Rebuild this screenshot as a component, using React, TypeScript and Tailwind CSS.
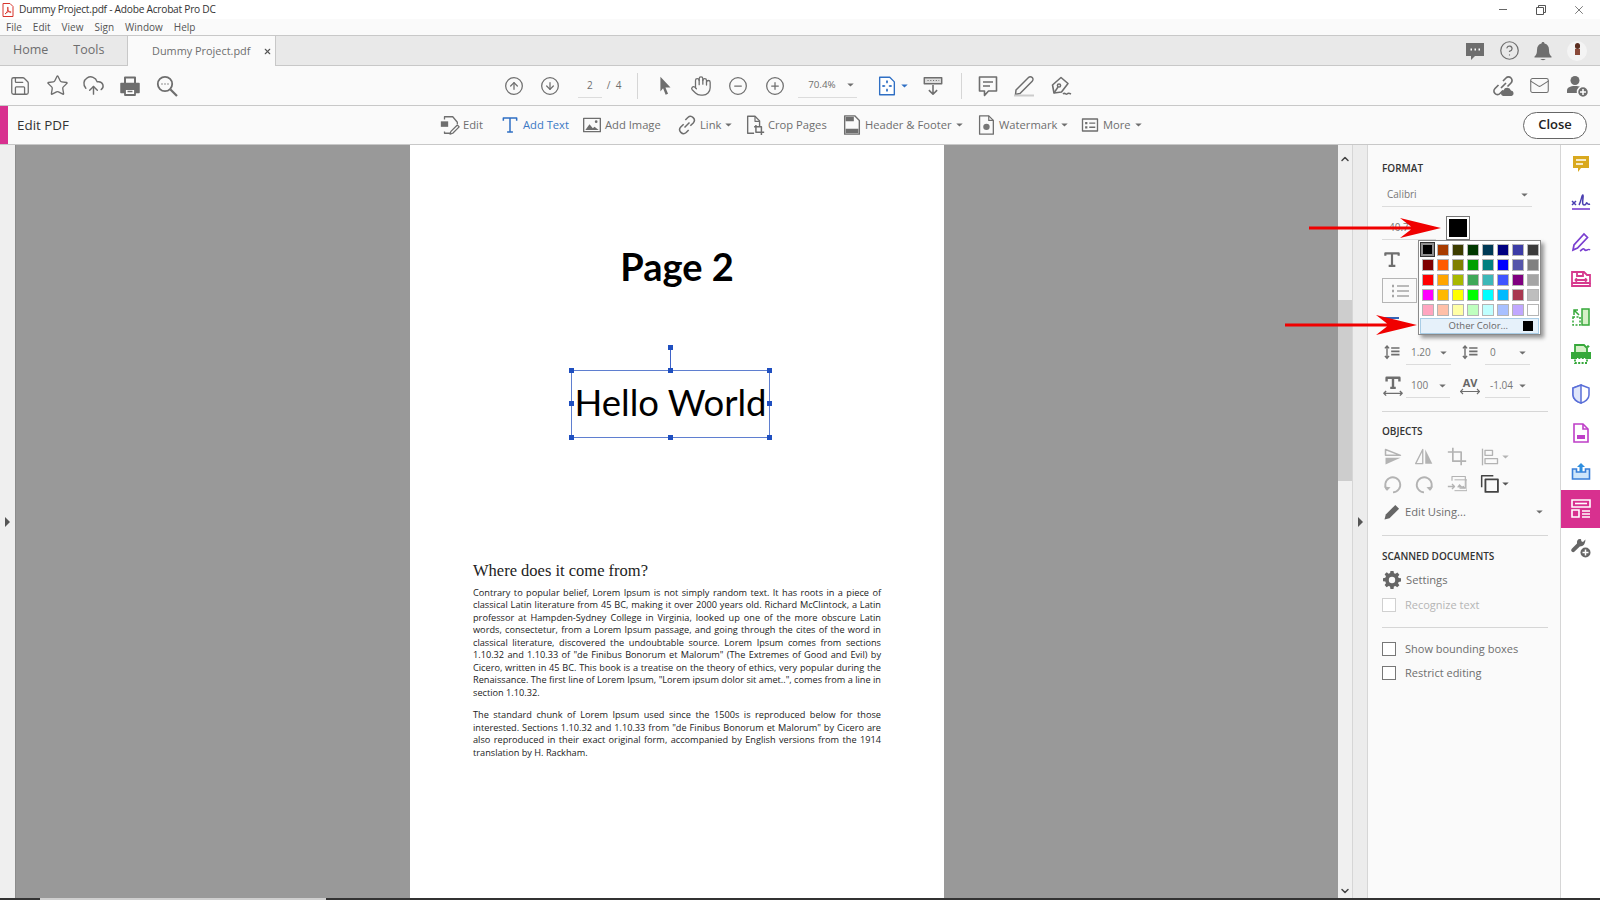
// App.tsx - Acrobat Edit PDF window

import type { ReactNode } from "react";
import {
  ChevronDown,
  ChevronUp,
  CircleArrowDown,
  CircleArrowUp,
  CircleHelp,
  CircleMinus,
  CirclePlus,
  CloudUpload,
  Hand,
  Mail,
  Save,
  Star,
  X,
} from "lucide-react";

const GRAY = "#6e6e6e";

function Svg({ size = 24, color = GRAY, children, vb = "0 0 24 24" }: { size?: number; color?: string; children: ReactNode; vb?: string }) {
  return (
    <svg width={size} height={size} viewBox={vb} fill="none" stroke={color} strokeWidth={1.5} strokeLinejoin="round">
      {children}
    </svg>
  );
}

function Caret({ color = "#6e6e6e", className = "" }: { color?: string; className?: string }) {
  return (
    <svg width="7" height="4" viewBox="0 0 8 5" className={className}>
      <path d="M0 0.5h8L4 4.5z" fill={color} />
    </svg>
  );
}

function Printer() {
  return (
    <Svg>
      <path d="M7 9V3.5h10V9" fill="none" strokeWidth={2} />
      <path d="M3 9.5h18v9h-3.5V15h-11v3.5H3z" fill={GRAY} stroke={GRAY} />
      <path d="M7 15h10v6H7z" fill="#fff" strokeWidth={1.8} />
      <path d="M9.5 17.5h5" />
    </Svg>
  );
}

function SearchDots() {
  return (
    <Svg>
      <circle cx="10" cy="10" r="7.2" strokeWidth={1.8} />
      <path d="M15.5 15.5L22 22" strokeWidth={2.2} />
      <path d="M6.5 10h1M9.5 10h1M12.5 10h1" strokeWidth={1.6} />
    </Svg>
  );
}

function Pointer() {
  return (
    <Svg size={22}>
      <path d="M7 2l11 11.5h-5.5l2.8 7-2.6 1-2.8-7L7 18z" fill={GRAY} stroke="none" />
    </Svg>
  );
}

function FitPage() {
  return (
    <Svg size={22} color="#2f6fc4">
      <path d="M4 2.5h11l5 5v14H4z" fill="#fff" />
      <path d="M12 6v3M12 15v3M7 12h3M14 12h3" strokeWidth={1.6} />
      <path d="M10.8 8h2.4L12 6zM10.8 16h2.4L12 18zM8.5 10.8v2.4L6.5 12zM15.5 10.8v2.4l2-1.2z" fill="#2f6fc4" stroke="none" />
    </Svg>
  );
}

function Keyboard() {
  return (
    <Svg size={22}>
      <path d="M2.5 3h19v6.5h-19z" fill="#ddd" strokeWidth={1.6} />
      <path d="M6 6h1.2M9 6h1.2M12 6h1.2M15 6h1.2M18 6h.8" strokeWidth={1.3} />
      <path d="M12 11v10M7.5 16.5L12 21l4.5-4.5" strokeWidth={1.7} />
    </Svg>
  );
}

function Comment({ size = 24 }: { size?: number }) {
  return (
    <Svg size={size}>
      <path d="M3.5 3h17v14h-8l-4 4.5V17h-5z" strokeWidth={1.6} />
      <path d="M7 8h10M7 12h7" strokeWidth={1.5} />
    </Svg>
  );
}

function Highlight() {
  return (
    <Svg>
      <path d="M4 16L16.5 3.5a2.6 2.6 0 013.7 3.7L8 19.5l-4.5 1z" strokeWidth={1.5} />
      <path d="M2 21.5h20" stroke="#ccc" strokeWidth={2} />
    </Svg>
  );
}

function PenNib() {
  return (
    <Svg>
      <path d="M5 19L3.5 11 12 3.5l7 6L12.5 18z" strokeWidth={1.6} />
      <circle cx="10" cy="11.5" r="1.6" />
      <path d="M5 19l4-6" />
      <path d="M14 20c2-2 3 1 4 0s2-1 4 0" strokeWidth={1.5} />
    </Svg>
  );
}

function LinkCloud() {
  return (
    <Svg>
      <path d="M10 14l5-5M7.5 11L4 14.5a3.5 3.5 0 005 5l3-3M12 7l3-3a3.5 3.5 0 015 5l-3.5 3.5" strokeWidth={1.7} />
      <path d="M12 22a3 3 0 01.5-5.8 4 4 0 017.5.3A2.8 2.8 0 0120.5 22z" fill={GRAY} stroke="none" />
    </Svg>
  );
}

function UserPlus() {
  return (
    <Svg>
      <circle cx="10" cy="6.5" r="4.5" fill={GRAY} stroke="none" />
      <path d="M2 19v-2.5c0-3 3-4.5 8-4.5s6 1 6 2.5v4.5z" fill={GRAY} stroke="none" />
      <circle cx="18" cy="18" r="5.5" fill={GRAY} stroke="#fafafa" />
      <path d="M18 15v6M15 18h6" stroke="#fff" />
    </Svg>
  );
}

function EditTool() {
  return (
    <Svg size={22}>
      <path d="M8 3h7l5 6v2M6 19v2h7M6 6V3h2" strokeWidth={1.4} />
      <path d="M2 8h8v6H2z" fill={GRAY} stroke="none" />
      <path d="M13 19l7-7 2 2-7 7-3 1z" strokeWidth={1.4} />
    </Svg>
  );
}

function TBig({ color, size = 20 }: { color: string; size?: number }) {
  return (
    <Svg size={size} color={color}>
      <path d="M4 7V3.5h16V7M12 3.5v17M8.5 20.5h7" strokeWidth={1.8} />
    </Svg>
  );
}

function ImageTool() {
  return (
    <Svg size={20}>
      <path d="M2 4h20v16H2z" strokeWidth={1.6} />
      <path d="M4 18l5-7 4 5 2-2 5 4z" fill={GRAY} stroke="none" />
      <circle cx="17" cy="8" r="1.6" fill={GRAY} stroke="none" />
    </Svg>
  );
}

function ChainLink() {
  return (
    <Svg size={20}>
      <path d="M9 15l6-6M10 6l3-3a4.6 4.6 0 016.5 6.5l-3.5 3.5M14 18l-3 3a4.6 4.6 0 01-6.5-6.5L8 11" strokeWidth={1.8} />
    </Svg>
  );
}

function CropTool() {
  return (
    <Svg size={22}>
      <path d="M11 21H4V2.5h8l5 5V13" strokeWidth={1.5} />
      <path d="M12 2.5V8h5" strokeWidth={1.3} />
      <path d="M13 12v8h9M11 14h8v9" strokeWidth={1.6} />
    </Svg>
  );
}

function HeaderTool() {
  return (
    <Svg size={22}>
      <path d="M4 2h11l5 5v15H4z" strokeWidth={1.5} />
      <path d="M5 3h9v5H5zM5 16h14v5H5z" fill={GRAY} stroke="none" />
    </Svg>
  );
}

function WatermarkTool() {
  return (
    <Svg size={22}>
      <path d="M5 2h10l5 5v15H5z" strokeWidth={1.4} />
      <path d="M15 2v5h5" strokeWidth={1.3} />
      <circle cx="12.5" cy="14" r="3.5" fill="#777" stroke="none" />
    </Svg>
  );
}

function MoreTool() {
  return (
    <Svg size={18}>
      <path d="M2 4h20v16H2z" strokeWidth={1.8} />
      <path d="M5.5 8h3v3h-3zM5.5 13.5h3v3h-3z" fill={GRAY} stroke="none" />
      <path d="M11 9.5h8M11 15h8" strokeWidth={1.8} />
    </Svg>
  );
}

function PdfDoc() {
  return (
    <svg width="12" height="14" viewBox="0 0 12 14" fill="none">
      <path d="M1 .5h7l3 3v10H1z" stroke="#d8352c" fill="#fff" />
      <path d="M3 11c2-1 3-4 3-6s-1-1 0 2 3 3 3 2-3-1-6 2z" stroke="#d8352c" strokeWidth=".9" />
    </svg>
  );
}

function TextGlyph() {
  return (
    <Svg size={20}>
      <path d="M4 7V4h16v3M12 4v15M8 19h8" strokeWidth={2.6} />
    </Svg>
  );
}

function LineSpace() {
  return (
    <Svg size={20}>
      <path d="M4 3v14M1.5 5.5L4 2.5l2.5 3M1.5 14.5L4 17.5l2.5-3" strokeWidth={1.7} transform="translate(2 1)" />
      <path d="M11 6h10M11 10h10M11 14h10" strokeWidth={2} />
    </Svg>
  );
}

function TextScale() {
  return (
    <Svg size={22}>
      <path d="M5 7V3h14v4M12 3v11M9 14h6" strokeWidth={2.6} />
      <path d="M2 20h20M4.5 17.5L2 20l2.5 2.5M19.5 17.5L22 20l-2.5 2.5" strokeWidth={1.5} />
    </Svg>
  );
}

function Tracking() {
  return (
    <div className="flex w-[22px] flex-col items-center">
      <span className="text-[11px] leading-[11px] font-bold text-[#666]">AV</span>
      <svg width="20" height="7" viewBox="0 0 20 7" fill="none" stroke={GRAY} strokeWidth="1.2">
        <path d="M0 3.5h20M3 1L.5 3.5 3 6M17 1l2.5 2.5L17 6" />
      </svg>
    </div>
  );
}

const DIS = "#b3b3b3";

function ObjIcons() {
  return (
    <div>
      <div className="flex h-[27px] items-center">
        <div className="w-[32px] pl-[1px]">
          <Svg size={20} color={DIS}>
            <path d="M3 3l18 7H3z" fill="none" strokeWidth={1.8} />
            <path d="M3 13h18L3 21z" fill={DIS} stroke="none" />
          </Svg>
        </div>
        <div className="w-[33px]">
          <Svg size={20} color={DIS}>
            <path d="M10.5 3L2 20h8.5z" strokeWidth={1.6} />
            <path d="M13.5 3L22 20h-8.5z" fill={DIS} stroke="none" />
          </Svg>
        </div>
        <div className="w-[33px]">
          <Svg size={20} color={DIS}>
            <path d="M1 6h16v16M7 1v16h16" strokeWidth={2} />
          </Svg>
        </div>
        <div className="flex items-center gap-[2px]">
          <Svg size={20} color={DIS}>
            <path d="M3 2v20" strokeWidth={1.6} />
            <path d="M6 4h9v6H6zM6 14h15v6H6z" strokeWidth={1.6} />
          </Svg>
          <Caret color={DIS} />
        </div>
      </div>
      <div className="flex h-[27px] items-center">
        <div className="w-[32px] pl-[1px]">
          <Svg size={20} color={DIS}>
            <path d="M5 19a9 9 0 117 3" strokeWidth={2.2} />
            <path d="M1 15l4 5 4-4z" fill={DIS} stroke="none" />
          </Svg>
        </div>
        <div className="w-[33px]">
          <Svg size={20} color={DIS}>
            <path d="M19 19a9 9 0 10-7 3" strokeWidth={2.2} />
            <path d="M23 15l-4 5-4-4z" fill={DIS} stroke="none" />
          </Svg>
        </div>
        <div className="w-[33px]">
          <Svg size={20} color={DIS}>
            <path d="M6 8V3h16v14h-7" strokeWidth={1.4} />
            <path d="M9 7h15v13H9" strokeWidth={1.2} />
            <path d="M12 16l3-4 3 3 2-1 2 3z" fill={DIS} stroke="none" />
            <path d="M1 15h8M6 12l3 3-3 3" strokeWidth={1.6} />
          </Svg>
        </div>
        <div className="flex items-center gap-[2px]">
          <Svg size={20} color="#444">
            <path d="M2 16V2h14" strokeWidth={1.8} />
            <path d="M6.5 6.5h15v15h-15z" strokeWidth={2.2} />
          </Svg>
          <Caret color="#555" />
        </div>
      </div>
    </div>
  );
}

const SWATCHES = [
  ["#000000", "#a83c00", "#3d3d00", "#003800", "#003a55", "#000080", "#3c3ca6", "#3c3c3c"],
  ["#800000", "#ff5a00", "#808000", "#00a000", "#008080", "#0000ff", "#5555aa", "#808080"],
  ["#ff0000", "#ffa500", "#a8b800", "#3fa858", "#3cb8b8", "#4055ff", "#800080", "#a5a5a5"],
  ["#ff00ff", "#ffb900", "#ffff00", "#00ff00", "#00ffff", "#00baff", "#a83850", "#bebebe"],
  ["#ffa5c0", "#ffc0a8", "#ffffa5", "#bfffbf", "#bfffff", "#a8c0ff", "#c0a8ff", "#ffffff"],
];

function ColorPopup() {
  return (
    <div className="absolute top-[95px] left-[50px] z-10 w-[123px] border border-[#8a8a8a] bg-white pt-[1px] shadow-[3px_3px_4px_rgba(0,0,0,0.4)]">
      <div className="grid grid-cols-8 pl-[1px]">
        {SWATCHES.flat().map((c, i) => (
          <div key={i} className="flex h-[15px] w-[15px] items-center justify-center">
            <div
              className={i === 0 ? "h-[13px] w-[13px] border-2 border-[#8f8f8f] outline outline-1 outline-[#333]" : "h-[12px] w-[12px] border-[1.5px] border-[#b5b5b5]"}
              style={{ backgroundColor: c }}
            />
          </div>
        ))}
      </div>
      <div className="mx-[1px] mt-[1px] flex h-[16px] items-center justify-end border border-[#a9cde6] bg-[#e6f1fa] pr-[5px]">
        <span className="mr-[15px] text-[9.5px] text-[#666]">Other Color...</span>
        <div className="h-[10px] w-[10px] bg-black" />
      </div>
    </div>
  );
}

function RedArrow({ className, width }: { className: string; width: number }) {
  return (
    <svg width={width} height="20" viewBox={`0 0 ${width} 20`} className={className}>
      <path d={`M0 8.6H${width - 30}L${width - 41} 0 ${width} 10 ${width - 41} 20 ${width - 30} 11.4H0z`} fill="#f00000" />
    </svg>
  );
}

function SelectField({ value, w, ml = 0 }: { value: string; w: number; ml?: number }) {
  return (
    <div className="flex h-[24px] items-center justify-between border-b border-[#dcdcdc] pr-[4px] pl-[5px] text-[10px] text-[#777]" style={{ width: w, marginLeft: ml }}>
      <span>{value}</span>
      <Caret />
    </div>
  );
}

function Check({ label, disabled }: { label: string; disabled?: boolean }) {
  return (
    <label className={`flex items-center gap-[9px] text-[11px] ${disabled ? "text-[#b5b5b5]" : "text-[#6e6e6e]"}`}>
      <span className={`h-[14px] w-[14px] border bg-white ${disabled ? "border-[#d0d0d0]" : "border-[#777]"}`} />
      {label}
    </label>
  );
}

function PanelTitle({ children }: { children: ReactNode }) {
  return <div className="text-[10px] font-semibold text-[#333]">{children}</div>;
}

function FormatPanel() {
  return (
    <aside className="relative w-[193px] shrink-0 border-r border-[#d6d6d6] bg-[#fafafa] pt-[16px] pl-[14px]">
      <PanelTitle>FORMAT</PanelTitle>
      <div className="mt-[7px] w-[150px]">
        <SelectField value="Calibri" w={150} />
      </div>
      <div className="mt-[9px] flex items-start">
        <div className="flex h-[24px] w-[54px] items-center border-b border-[#dcdcdc] pl-[7px] text-[10px] text-[#777]">40.7</div>
        <div className="ml-[10px] flex h-[24px] w-[24px] items-center justify-center border border-[#777] bg-white">
          <div className="h-[18px] w-[18px] bg-black" />
        </div>
      </div>
      <div className="mt-[10px]">
        <TextGlyph />
      </div>
      <div className="mt-[8px] flex h-[25px] w-[35px] items-center justify-center border border-[#b5b5b5]">
        <svg width="18" height="14" viewBox="0 0 18 14" fill="none" stroke="#a5a5a5" strokeWidth="1.4">
          <path d="M6 2h12M6 7h12M6 12h12" />
          <path d="M1 2h2M1 7h2M1 12h2" strokeWidth="2.4" />
        </svg>
      </div>
      <div className="mt-[14px] h-[14px] w-[17px] border-t-2 border-[#3565b8]" />
      <div className="mt-[10px] flex items-center">
        <LineSpace />
        <SelectField value="1.20" w={45} ml={4} />
        <div className="ml-[9px]">
          <LineSpace />
        </div>
        <SelectField value="0" w={45} ml={5} />
      </div>
      <div className="mt-[9px] flex items-center">
        <TextScale />
        <SelectField value="100" w={44} ml={2} />
        <div className="ml-[9px]">
          <Tracking />
        </div>
        <SelectField value="-1.04" w={45} ml={4} />
      </div>
      <div className="mt-[13px] w-[166px] border-t border-[#d6d6d6]" />
      <div className="mt-[12px]">
        <PanelTitle>OBJECTS</PanelTitle>
      </div>
      <div className="mt-[4px]">
        <ObjIcons />
      </div>
      <div className="mt-[5px] flex w-[166px] items-center">
        <Svg size={20} color="#666">
          <path d="M3 21l1.5-6L16 3.5l4.5 4.5L9 19.5z" fill="#666" stroke="none" />
        </Svg>
        <span className="ml-[3px] text-[11.2px] text-[#6e6e6e]">Edit Using...</span>
        <Caret className="mr-[5px] ml-auto" />
      </div>
      <div className="mt-[13px] w-[166px] border-t border-[#d6d6d6]" />
      <div className="mt-[13px]">
        <PanelTitle>SCANNED DOCUMENTS</PanelTitle>
      </div>
      <div className="mt-[6px] flex items-center">
        <svg width="20" height="20" viewBox="0 0 20 20">
          <path
            d="M8.3 1h3.4l.5 2.6 1.6.7 2.2-1.5 2.2 2.4-1.5 2 .7 1.7 2.6.4v3.4l-2.6.5-.7 1.6 1.5 2.2-2.4 2.2-2-1.5-1.7.7-.4 2.6H8.3l-.5-2.6-1.6-.7-2.2 1.5L1.8 16.6l1.5-2-.7-1.7L0 12.5V9.1l2.6-.5.7-1.6L1.8 4.8 4.2 2.6l2 1.5 1.7-.7z"
            fill="#666"
            transform="translate(1 0) scale(.9)"
          />
          <circle cx="10" cy="10" r="3.2" fill="#fafafa" />
        </svg>
        <span className="ml-[4px] text-[11.2px] text-[#6e6e6e]">Settings</span>
      </div>
      <div className="mt-[7px]">
        <Check label="Recognize text" disabled />
      </div>
      <div className="mt-[13px] w-[166px] border-t border-[#d6d6d6]" />
      <div className="mt-[13px]">
        <Check label="Show bounding boxes" />
      </div>
      <div className="mt-[8px]">
        <Check label="Restrict editing" />
      </div>
      <ColorPopup />
      <RedArrow className="absolute top-[73px] left-[-59px] z-20" width={132} />
      <RedArrow className="absolute top-[170px] left-[-83px] z-20" width={132} />
    </aside>
  );
}

const Y = "#d9a91f";
const P = "#7a3fd0";
const M = "#d63a8e";
const G = "#36a83a";
const B = "#3a7fd8";

function Rail() {
  return (
    <nav className="flex w-[39px] shrink-0 flex-col items-center bg-white pt-[7px]">
      <div className="flex h-[24px] items-center">
        <svg width="20" height="20" viewBox="0 0 20 20">
          <path d="M2 2h16v12h-8l-3 4v-4H2z" fill={Y} />
          <path d="M5 6h10M5 10h7" stroke="#fff" strokeWidth="1.6" />
        </svg>
      </div>
      <div className="mt-[14px] flex h-[24px] items-center">
        <svg width="20" height="20" viewBox="0 0 20 20" fill="none" stroke="#4a3fb0" strokeWidth="1.5">
          <path d="M1 9l4 4M5 9l-4 4M8 13c2-3 3-11 4-10s-2 10 1 10 2-3 3-2 1 2 3 1" />
          <path d="M1 17h18" strokeWidth="1.6" stroke={P} />
        </svg>
      </div>
      <div className="mt-[16px] flex h-[24px] items-center">
        <svg width="22" height="22" viewBox="0 0 22 22" fill="none" stroke={P} strokeWidth="1.7">
          <path d="M3 19l1-5L14 3l3.5 3.5L7.5 17z" />
          <path d="M10 20c2-1 3-3 4-2s1 2 3 1 2-1 3 0" />
        </svg>
      </div>
      <div className="mt-[13px] flex h-[24px] items-center">
        <svg width="20" height="20" viewBox="0 0 20 20" fill="none" stroke={M} strokeWidth="1.8">
          <path d="M1 3h12l3 3h3v8H1z" />
          <path d="M6 3v4h6V3" />
          <path d="M4 11h12M4 11l2-1.6M4 11l2 1.6M16 11l-2-1.6M16 11l-2 1.6" />
          <path d="M1 14v3h18v-3" />
        </svg>
      </div>
      <div className="mt-[14px] flex h-[24px] items-center">
        <svg width="20" height="20" viewBox="0 0 20 20" fill="none" stroke={G} strokeWidth="1.5">
          <path d="M11 2h7v16h-7z" fill="#d6f0c8" />
          <path d="M2 10h7v8H2z" strokeDasharray="2 1.5" />
          <path d="M3 8V3h4M3 3l5 5" />
        </svg>
      </div>
      <div className="mt-[13px] flex h-[24px] items-center">
        <svg width="22" height="22" viewBox="0 0 22 22" fill="none" stroke={G} strokeWidth="1.8">
          <path d="M5 9V2h9l3 3v4" fill="#d6f0c8" />
          <path d="M1 9h20v7H1z" fill={G} stroke="none" />
          <path d="M5 15h12v5H5z" fill="#fff" strokeDasharray="2 1.4" />
          <path d="M18 2v3M16.5 3.5h3" strokeWidth="1.2" />
        </svg>
      </div>
      <div className="mt-[16px] flex h-[24px] items-center">
        <svg width="18" height="20" viewBox="0 0 18 20" fill="none" stroke="#5a6fd8" strokeWidth="1.5">
          <path d="M9 1l8 3v7c0 4-4 7-8 8-4-1-8-4-8-8V4z" />
          <path d="M9 1v18C5 18 1 15 1 11V4z" fill="#dfe6fa" />
        </svg>
      </div>
      <div className="mt-[15px] flex h-[24px] items-center">
        <svg width="18" height="20" viewBox="0 0 18 20" fill="none" stroke="#bf3fc8" strokeWidth="1.6">
          <path d="M2 1h9l5 5v13H2z" />
          <path d="M5 12h8v4H5z" fill="#bf3fc8" stroke="none" />
          <path d="M11 1v5h5" />
        </svg>
      </div>
      <div className="mt-[14px] flex h-[24px] items-center">
        <svg width="20" height="20" viewBox="0 0 20 20" fill="none" stroke={B} strokeWidth="1.6">
          <path d="M1.5 8h4v3h9V8h4v10h-17z" fill="#cfe6fa" />
          <path d="M10 2l4 4h-2.5v5h-3V6H6z" fill="#2e8fe0" stroke="none" />
        </svg>
      </div>
      <div className="mt-[7px] flex h-[38px] w-full items-center justify-center bg-[#d8308f]">
        <svg width="22" height="22" viewBox="0 0 22 22" fill="none" stroke="#fff" strokeWidth="1.6">
          <path d="M2 2h18v7H2zM2 12h7v7H2z" />
          <path d="M5 5.500h12" />
          <path d="M12 13h8M12 16h8M12 19h8" />
        </svg>
      </div>
      <div className="mt-[8px] flex h-[24px] items-center">
        <svg width="20" height="20" viewBox="0 0 20 20">
          <path d="M18 2l-3 3-2-1-.5-2.5C9 .5 7 3 7.5 7L1 13.5c-1 1-1 2.5 0 3.5s2.5 1 3.5 0L11 10.5l3-.5c3-1 4-5 4-8z" fill="#666" transform="scale(.8)" />
          <circle cx="14.5" cy="14.5" r="5" fill="#666" />
          <path d="M14.5 11.5v6M11.5 14.5h6" stroke="#fff" strokeWidth="1.5" />
        </svg>
      </div>
    </nav>
  );
}

function ToolBtn({ icon, label, caret, blue, w }: { icon: ReactNode; label: string; caret?: boolean; blue?: boolean; w: number }) {
  return (
    <div className={`flex items-center text-[11.2px] ${blue ? "text-[#3b78c4]" : "text-[#6e6e6e]"}`} style={{ width: w }}>
      <div className="flex w-[22px] shrink-0 justify-center">{icon}</div>
      <span className="ml-[2px] whitespace-nowrap">{label}</span>
      {caret && <Caret className="ml-[4px]" />}
    </div>
  );
}

const Slot = ({ children, w = 36.7 }: { children: ReactNode; w?: number }) => (
  <div className="flex shrink-0 justify-center" style={{ width: w }}>
    {children}
  </div>
);

const PARA_1 = [
  "Contrary to popular belief, Lorem Ipsum is not simply random text. It has roots in a piece of",
  "classical Latin literature from 45 BC, making it over 2000 years old. Richard McClintock, a Latin",
  "professor at Hampden-Sydney College in Virginia, looked up one of the more obscure Latin",
  "words, consectetur, from a Lorem Ipsum passage, and going through the cites of the word in",
  "classical literature, discovered the undoubtable source. Lorem Ipsum comes from sections",
  '1.10.32 and 1.10.33 of "de Finibus Bonorum et Malorum" (The Extremes of Good and Evil) by',
  "Cicero, written in 45 BC. This book is a treatise on the theory of ethics, very popular during the",
  'Renaissance. The first line of Lorem Ipsum, "Lorem ipsum dolor sit amet..", comes from a line in',
];

const PARA_2 = [
  "The standard chunk of Lorem Ipsum used since the 1500s is reproduced below for those",
  'interested. Sections 1.10.32 and 1.10.33 from "de Finibus Bonorum et Malorum" by Cicero are',
  "also reproduced in their exact original form, accompanied by English versions from the 1914",
];

function Para({ lines, last }: { lines: string[]; last: string }) {
  return (
    <div className="text-[9.2px] leading-[12.47px] text-[#222]">
      {lines.map((l) => (
        <div key={l} className="text-justify [text-align-last:justify]">
          {l}
        </div>
      ))}
      <div>{last}</div>
    </div>
  );
}

function Handle({ className }: { className: string }) {
  return <span className={`absolute h-[5px] w-[5px] bg-[#1f4fc0] ${className}`} />;
}

function SelectionBox() {
  return (
    <div className="relative mt-[78px] ml-[161px] flex h-[68px] w-[199px] items-center justify-center border border-[#5f7fd0] pb-[4px] font-['Lato',sans-serif] text-[36.5px] text-black">
      Hello World
      <span className="absolute top-[-23px] left-[98px] h-[23px] w-[1px] bg-[#3f63c8]" />
      <Handle className="top-[-26px] left-[96px]" />
      <Handle className="top-[-3px] left-[-3px]" />
      <Handle className="top-[-3px] left-[96px]" />
      <Handle className="top-[-3px] right-[-3px]" />
      <Handle className="top-[30px] left-[-3px]" />
      <Handle className="top-[30px] right-[-3px]" />
      <Handle className="bottom-[-3px] left-[-3px]" />
      <Handle className="bottom-[-3px] left-[96px]" />
      <Handle className="right-[-3px] bottom-[-3px]" />
    </div>
  );
}

export default function App() {
  return (
    <div className="flex h-[900px] w-[1600px] flex-col overflow-hidden bg-white font-['Open_Sans',sans-serif] text-[#6e6e6e]">
      {/* title bar */}
      <div className="flex h-[19px] shrink-0 items-center bg-white pl-[2px] text-[10.2px] tracking-[-0.25px] text-[#333]">
        <PdfDoc />
        <span className="ml-[5px]">Dummy Project.pdf - Adobe Acrobat Pro DC</span>
        <div className="ml-auto flex items-center text-[#555]">
          <div className="flex w-[38px] justify-center">
            <span className="h-[1px] w-[8px] bg-[#666]" />
          </div>
          <div className="flex w-[38px] justify-center">
            <svg width="10" height="10" viewBox="0 0 10 10" fill="none" stroke="#555">
              <path d="M.5 2.5h7v7h-7zM2.5 2.5v-2h7v7h-2" />
            </svg>
          </div>
          <div className="flex w-[40px] justify-center pr-[2px]">
            <X size={14} strokeWidth={1.2} color="#444" />
          </div>
        </div>
      </div>
      {/* menu bar */}
      <div className="flex h-[17px] shrink-0 items-center gap-[11px] border-b border-[#c8c8c8] bg-[#fafafa] pl-[6px] text-[10px] text-[#555]">
        <span>File</span>
        <span>Edit</span>
        <span>View</span>
        <span>Sign</span>
        <span>Window</span>
        <span>Help</span>
      </div>
      {/* tabs */}
      <div className="flex h-[30px] shrink-0 items-stretch border-b border-[#c8c8c8] bg-[#e9e9e9] text-[12.5px] text-[#6e6e6e]">
        <div className="flex w-[127px] items-center gap-[25px] pl-[13px]">
          <span>Home</span>
          <span>Tools</span>
        </div>
        <div className="mb-[-1px] flex w-[149px] items-center border-x border-[#c8c8c8] bg-[#fafafa] pl-[24px] text-[10.9px]">
          <span className="whitespace-nowrap">Dummy Project.pdf</span>
          <X size={9} strokeWidth={3} className="ml-[13px]" color="#555" />
        </div>
        <div className="ml-auto flex items-center pr-[6px]">
          <Slot w={34}>
            <svg width="20" height="20" viewBox="0 0 20 20">
              <path d="M1 2h18v13h-9l-4 4v-4H1z" fill="#6e6e6e" />
              <path d="M5.5 8.500h1.500M9.500 8.500h1.500M13.500 8.500h1.500" stroke="#fff" strokeWidth="2" />
            </svg>
          </Slot>
          <Slot w={34}>
            <CircleHelp size={21} strokeWidth={1.4} color="#6e6e6e" />
          </Slot>
          <Slot w={34}>
            <svg width="18" height="20" viewBox="0 0 18 20">
              <path d="M9 1c1 0 1.5.6 1.5 1.5C13.500 3 15 5.500 15 9c0 3 .5 5 2.500 6.500v1H.5v-1C2.500 14 3 12 3 9c0-3.500 1.500-6 4.500-6.500C7.500 1.600 8 1 9 1z" fill="#6e6e6e" />
              <path d="M6.500 18h5c-.5 1.500-4.500 1.500-5 0z" fill="#6e6e6e" />
            </svg>
          </Slot>
          <Slot w={34}>
            <div className="relative h-[20px] w-[20px] overflow-hidden rounded-full bg-[#f4f4f4]">
              <span className="absolute top-[2px] left-[8px] h-[6px] w-[5px] rounded-full bg-[#5a2d1f]" />
              <span className="absolute top-[8px] left-[8px] h-[6px] w-[5px] bg-[#8a4a3a]" />
            </div>
          </Slot>
        </div>
      </div>
      {/* main toolbar */}
      <div className="flex h-[40px] shrink-0 items-center border-b border-[#c8c8c8] bg-[#fafafa] pl-[2px]">
        <Slot><Save size={22} strokeWidth={1.4} color={GRAY} /></Slot>
        <Slot><Star size={23} strokeWidth={1.4} color={GRAY} /></Slot>
        <Slot><CloudUpload size={23} strokeWidth={1.5} color={GRAY} /></Slot>
        <Slot><Printer /></Slot>
        <Slot><SearchDots /></Slot>
        <div className="ml-[310px] flex items-center">
          <Slot><CircleArrowUp size={20} strokeWidth={1.5} color={GRAY} /></Slot>
          <Slot><CircleArrowDown size={20} strokeWidth={1.5} color={GRAY} /></Slot>
        </div>
        <div className="ml-[9px] flex h-[25px] w-[24px] items-center justify-center border-b border-[#dcdcdc] text-[10px]">2</div>
        <span className="ml-[5px] text-[10px]">/&nbsp;&nbsp;4</span>
        <div className="ml-[16px] h-[26px] w-[1px] bg-[#d6d6d6]" />
        <div className="ml-[8px] flex items-center">
          <Slot><Pointer /></Slot>
          <Slot><Hand size={22} strokeWidth={1.4} color={GRAY} /></Slot>
          <Slot><CircleMinus size={20} strokeWidth={1.5} color={GRAY} /></Slot>
          <Slot><CirclePlus size={20} strokeWidth={1.5} color={GRAY} /></Slot>
        </div>
        <div className="ml-[5px] flex h-[25px] w-[59px] items-center border-b border-[#dcdcdc] pl-[10px] text-[9.8px]">
          70.4%
          <Caret className="ml-[11px]" />
        </div>
        <div className="ml-[19px] flex items-center">
          <FitPage />
          <Caret color="#2f6fc4" className="ml-[3px]" />
        </div>
        <div className="ml-[14px]">
          <Keyboard />
        </div>
        <div className="ml-[17px] h-[26px] w-[1px] bg-[#d6d6d6]" />
        <div className="ml-[7px] flex items-center">
          <Slot><Comment /></Slot>
          <Slot><Highlight /></Slot>
          <Slot><PenNib /></Slot>
        </div>
        <div className="ml-auto flex items-center pr-[5px]">
          <Slot w={37}><LinkCloud /></Slot>
          <Slot w={37}><Mail size={21} strokeWidth={1.2} color={GRAY} /></Slot>
          <Slot w={37}><UserPlus /></Slot>
        </div>
      </div>
      {/* edit pdf bar */}
      <div className="flex h-[39px] shrink-0 items-center border-b border-[#c8c8c8] bg-[#fafafa]">
        <div className="h-full w-[8px] bg-[#d8308f]" />
        <span className="ml-[9px] w-[422px] pt-[1px] text-[13.4px] font-medium text-[#333]">Edit PDF</span>
        <ToolBtn w={60} icon={<EditTool />} label="Edit" />
        <ToolBtn w={82} icon={<TBig color="#2f6fc4" />} label="Add Text" blue />
        <ToolBtn w={95} icon={<ImageTool />} label="Add Image" />
        <ToolBtn w={68} icon={<ChainLink />} label="Link" caret />
        <ToolBtn w={97} icon={<CropTool />} label="Crop Pages" />
        <ToolBtn w={134} icon={<HeaderTool />} label="Header &amp; Footer" caret />
        <ToolBtn w={104} icon={<WatermarkTool />} label="Watermark" caret />
        <ToolBtn w={68} icon={<MoreTool />} label="More" caret />
        <button className="mr-[13px] ml-auto h-[27px] w-[64px] rounded-full border border-[#666] bg-white text-[13px] font-semibold text-[#222]">Close</button>
      </div>
      {/* main area */}
      <div className="flex min-h-0 flex-1">
        <div className="flex w-[16px] shrink-0 items-center justify-center border-r border-[#8c8c8c] bg-[#efefef]">
          <span className="h-0 w-0 border-y-[5px] border-l-[5px] border-y-transparent border-l-[#555]" />
        </div>
        <div className="flex min-w-0 flex-1 justify-center overflow-hidden bg-[#999999]">
          <div className="w-[534px] shrink-0 bg-white pt-[95px]">
            <div className="text-center font-['Lato',sans-serif] text-[38px] leading-[52px] font-bold text-black">Page 2</div>
            <SelectionBox />
            <div className="mt-[123px] ml-[63px] font-['Liberation_Serif',serif] text-[16.5px] leading-[20px] text-[#222]">Where does it come from?</div>
            <div className="mt-[6px] ml-[63px] w-[408px]">
              <Para lines={PARA_1} last="section 1.10.32." />
              <div className="mt-[10px]">
                <Para lines={PARA_2} last="translation by H. Rackham." />
              </div>
            </div>
          </div>
        </div>
        <div className="flex w-[14px] shrink-0 flex-col items-center bg-[#f0f0f0]">
          <ChevronUp size={12} strokeWidth={3} color="#444" className="mt-[8px]" />
          <div className="mt-[135px] h-[181px] w-full bg-[#cdcdcd]" />
          <ChevronDown size={12} strokeWidth={3} color="#444" className="mt-auto mb-[1px]" />
        </div>
        <div className="flex w-[16px] shrink-0 items-center justify-center border-x border-[#d6d6d6] bg-[#ececec]">
          <span className="h-0 w-0 border-y-[5px] border-l-[5px] border-y-transparent border-l-[#555]" />
        </div>
        <FormatPanel />
        <Rail />
      </div>
      {/* desktop edge */}
      <div className="flex h-[2px] shrink-0 bg-[#333]">
        <div className="ml-[40px] w-[286px] bg-[#cfcfcf]" />
      </div>
    </div>
  );
}
